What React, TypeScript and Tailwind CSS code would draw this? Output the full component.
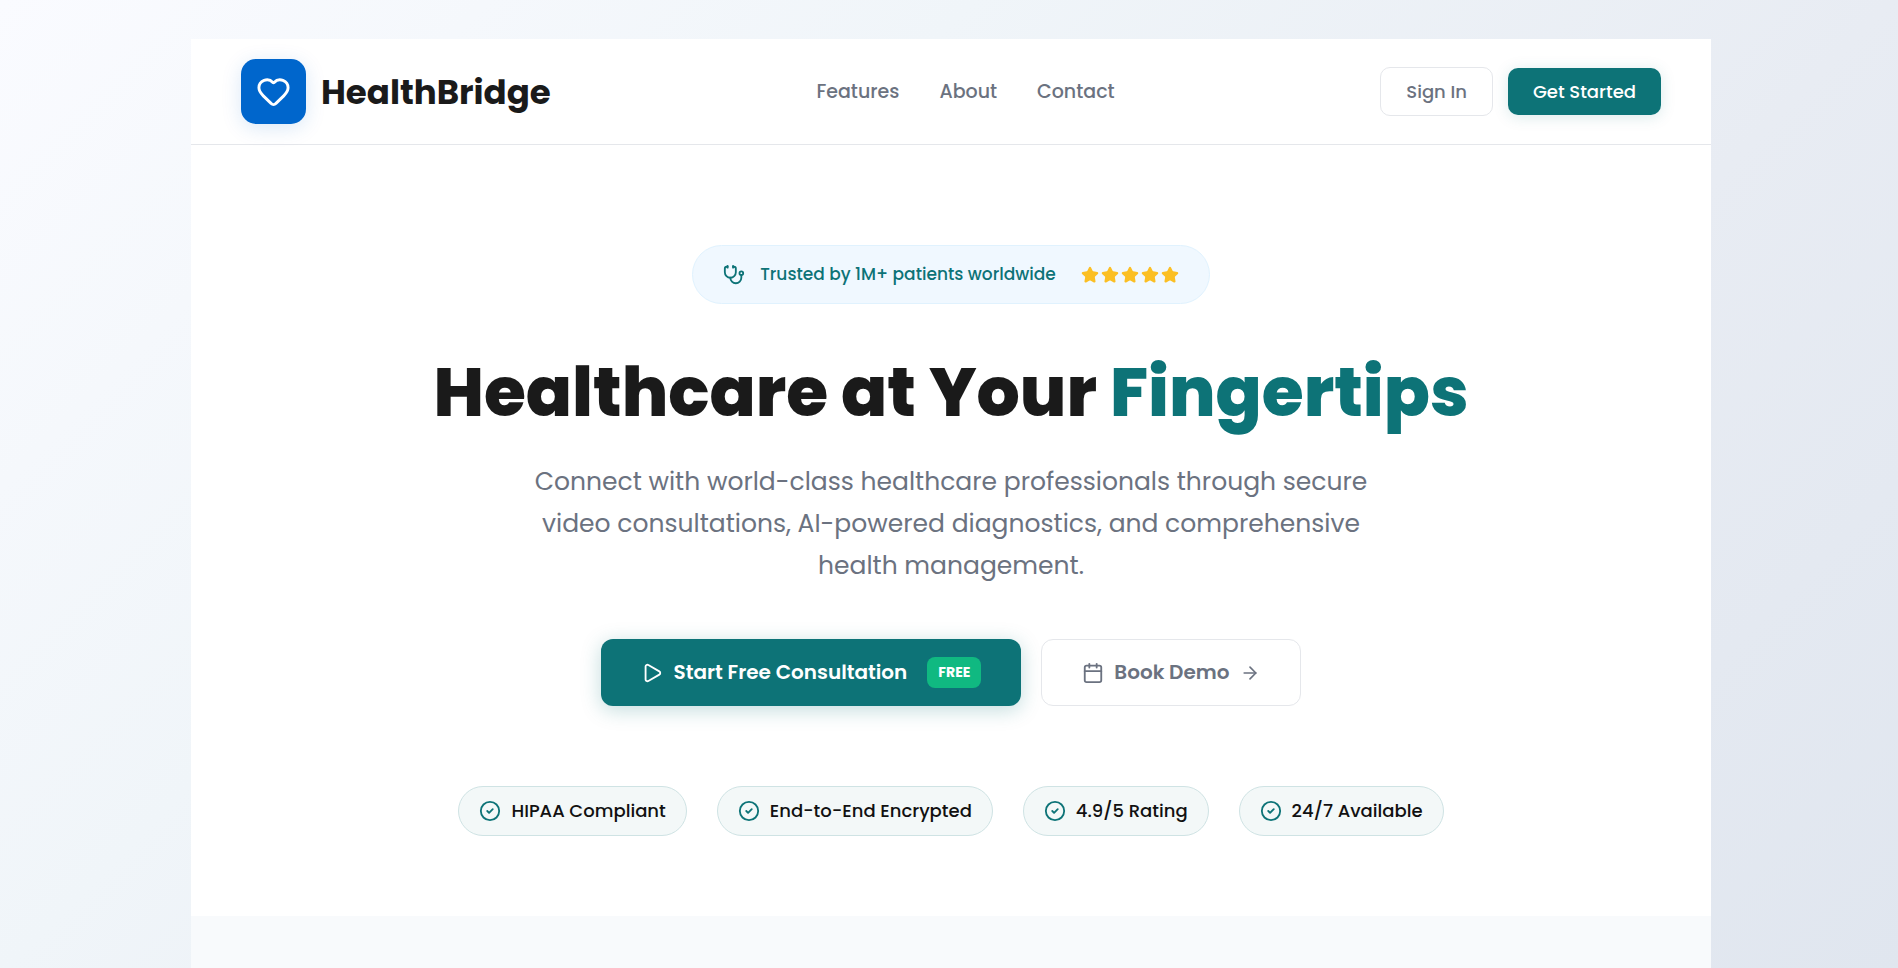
import {
  ArrowRight,
  Calendar,
  CircleCheck,
  Heart,
  Play,
  Star,
  Stethoscope,
} from "lucide-react";

const navLinks = ["Features", "About", "Contact"];
const trustBadges = [
  "HIPAA Compliant",
  "End-to-End Encrypted",
  "4.9/5 Rating",
  "24/7 Available",
];

function Header() {
  return (
    <header className="flex items-center justify-between border-b border-[#e5e7eb] px-[50px] py-5">
      <a href="#home" className="flex items-center gap-[15px]">
        <span className="flex size-[65px] items-center justify-center rounded-[15px] bg-[#0066cc] text-white shadow-[0_4px_20px_rgba(0,102,204,0.15)]">
          <Heart size={35} strokeWidth={2} />
        </span>
        <span className="text-[34px] leading-[52px] font-bold text-[#1a1a1a]">
          HealthBridge
        </span>
      </a>
      <nav className="flex gap-10">
        {navLinks.map((label) => (
          <a
            key={label}
            href={`#${label.toLowerCase()}`}
            className="text-[19px] leading-7 font-medium text-[#6b7280]"
          >
            {label}
          </a>
        ))}
      </nav>
      <div className="flex items-center gap-[15px]">
        <button
          type="button"
          className="rounded-[10px] border border-[#e5e7eb] px-[25px] py-2.5 text-[18px] leading-[27px] font-medium text-[#6b7280]"
        >
          Sign In
        </button>
        <button
          type="button"
          className="rounded-[10px] bg-[#0d7377] px-[25px] py-2.5 text-[18px] leading-[27px] font-medium text-white shadow-[0_2px_15px_rgba(13,115,119,0.15)]"
        >
          Get Started
        </button>
      </div>
    </header>
  );
}

function Hero() {
  return (
    <section className="flex flex-col items-center px-[50px] pt-[100px] pb-20 text-center">
      <div className="flex items-center rounded-full border border-[#e0f2fe] bg-[#f0f8ff] px-[30px] py-4 text-[#0d7377]">
        <Stethoscope size={22} />
        <span className="ml-[15px] text-[17px] leading-[25px] font-medium">
          Trusted by 1M+ patients worldwide
        </span>
        <span className="ml-[25px] flex gap-0.5 text-[#fbbf24]" role="img" aria-label="5 stars">
          {[1, 2, 3, 4, 5].map((n) => (
            <Star key={n} size={18} fill="currentColor" />
          ))}
        </span>
      </div>

      <h1 className="mt-[50px] text-[68px] leading-[77px] font-extrabold text-[#1a1a1a]">
        Healthcare at Your <span className="text-[#0d7377]">Fingertips</span>
      </h1>

      <p className="mt-[30px] max-w-[880px] text-[25px] leading-[42px] text-[#6b7280]">
        Connect with world-class healthcare professionals through secure video
        consultations, AI-powered diagnostics, and comprehensive health
        management.
      </p>

      <div className="mt-[52px] flex gap-5">
        <button
          type="button"
          className="flex items-center rounded-xl bg-[#0d7377] px-10 py-[18px] text-[20px] leading-[31px] font-semibold text-white shadow-[0_4px_20px_rgba(13,115,119,0.25)]"
        >
          <Play size={22} strokeWidth={2} />
          <span className="ml-2.5">Start Free Consultation</span>
          <span className="ml-5 rounded-lg bg-[#10b981] px-[11px] text-[14px] leading-[31px] font-bold">
            FREE
          </span>
        </button>
        <button
          type="button"
          className="flex items-center rounded-xl border border-[#e5e7eb] px-10 text-[20px] leading-[31px] font-semibold text-[#6b7280]"
        >
          <Calendar size={22} strokeWidth={2} />
          <span className="mx-2.5">Book Demo</span>
          <ArrowRight size={20} strokeWidth={2} />
        </button>
      </div>

      <ul className="mt-20 flex gap-[30px]">
        {trustBadges.map((label) => (
          <li
            key={label}
            className="flex items-center gap-2.5 rounded-full border border-[#cfe3e4] bg-[#f3f8f8] px-5 py-[11px] text-[18px] leading-[26px] font-medium text-[#111111]"
          >
            <CircleCheck size={22} className="text-[#0d7377]" />
            {label}
          </li>
        ))}
      </ul>
    </section>
  );
}

export default function App() {
  return (
    <div className="min-h-screen bg-[linear-gradient(135deg,#fafbff_0%,#f0f5f9_34%,#e8ecf3_66%,#e0e6ef_100%)] pt-[39px] pl-1 font-['Poppins','Inter',sans-serif]">
      <main className="mx-auto max-w-[1520px] bg-white">
        <Header />
        <Hero />
        <section id="features" className="h-[52px] bg-[#f8fafc]" />
      </main>
    </div>
  );
}
